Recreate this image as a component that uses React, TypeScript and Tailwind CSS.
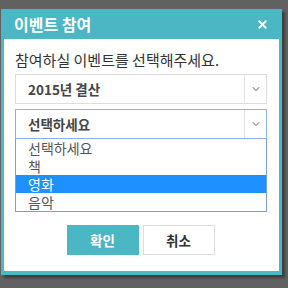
import { ChevronDown, X } from 'lucide-react'

const options = ['선택하세요', '책', '영화', '음악']

function SelectBox({ value, focused }: { value: string; focused?: boolean }) {
  return (
    <div
      className={`flex h-[30px] items-stretch border bg-white ${
        focused ? 'border-[#8db0ea]' : 'border-[#dddddd]'
      }`}
    >
      <div className="flex flex-1 items-center pl-[12px] text-[13.5px] font-semibold text-[#444]">{value}</div>
      <div className="flex w-[22px] items-center justify-center border-l border-[#e2e2e2]">
        <ChevronDown size={12} strokeWidth={2.2} className="text-[#a0a0a0]" />
      </div>
    </div>
  )
}

export default function App() {
  return (
    <div
      className="h-[288px] w-[288px] bg-[#616161] pl-[1px] pt-[9px]"
      style={{ fontFamily: '"Noto Sans CJK KR", "Noto Sans", sans-serif' }}
    >
      <div className="flex h-[266px] w-[281px] flex-col border-x-[3px] border-b-[4px] border-[#4bb6c4] bg-[#4bb6c4] shadow-[3px_3px_2px_rgba(0,0,0,0.35)]">
        {/* Header */}
        <div className="flex h-[30px] items-center justify-between pl-[10px] pr-[10px]">
          <span className="text-[16px] font-bold text-white">이벤트 참여</span>
          <X size={13} strokeWidth={3.5} className="text-white" />
        </div>

        {/* Body */}
        <div className="flex flex-1 flex-col bg-white pl-[11px] pr-[12px] pt-[10px]">
          <p className="h-[25px] text-[15px] leading-[21px] text-[#333]">참여하실 이벤트를 선택해주세요.</p>
          <SelectBox value="2015년 결산" />
          <div className="mt-[5px]">
            <SelectBox value="선택하세요" focused />
            <ul className="border border-t-0 border-[#7b9fd9] bg-white">
              {options.map((o, i) => (
                <li
                  key={o}
                  className={`flex h-[18px] items-center pl-[12px] text-[14px] ${
                    i === 2 ? 'bg-[#1e90ff] text-white' : 'text-[#555]'
                  }`}
                >
                  {o}
                </li>
              ))}
            </ul>
          </div>

          <div className="mt-[13px] flex justify-center gap-[4px] pr-[1px]">
            <button className="h-[30px] w-[72px] bg-[#4bb6c4] text-[13.5px] font-bold text-white">확인</button>
            <button className="h-[30px] w-[72px] border border-[#dedede] bg-white text-[13.5px] font-semibold text-[#333]">
              취소
            </button>
          </div>
        </div>
      </div>
    </div>
  )
}
